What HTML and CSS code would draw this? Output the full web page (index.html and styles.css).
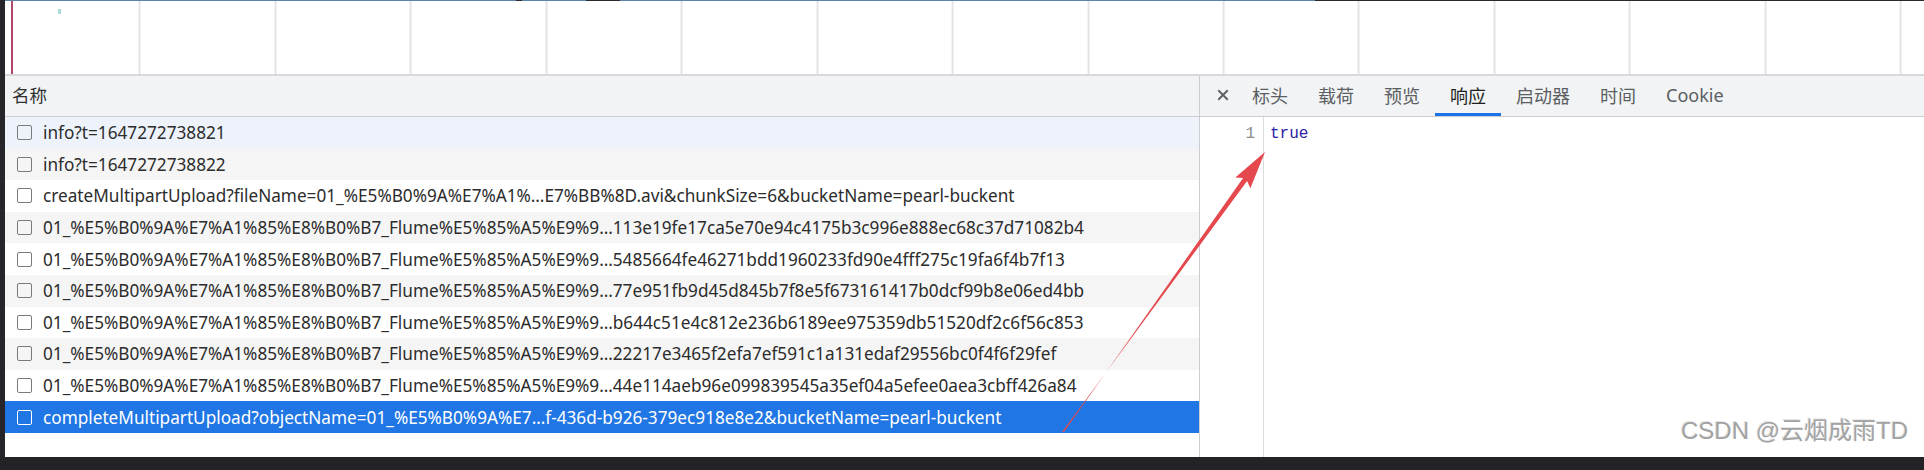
FILE: index.html
```html
<!DOCTYPE html>
<html lang="zh">
<head>
<meta charset="utf-8">
<title>Network</title>
<link rel="stylesheet" href="styles.css">
</head>
<body>
<div class="screen">
  <div class="top">
    <div class="strip"></div>
    <div class="devtools">
      <div class="timeline">
        <div class="overview-line"></div>
        <div class="overview">
          <span class="marker"></span>
          <span class="blip"></span>
        </div>
      </div>
      <div class="panes">
        <div class="list-pane">
          <div class="list-header">名称</div>
          <div class="rows">
            <div class="row hover"><span class="cb"></span><span class="name">info?t=1647272738821</span></div>
            <div class="row alt"><span class="cb"></span><span class="name">info?t=1647272738822</span></div>
            <div class="row"><span class="cb"></span><span class="name">createMultipartUpload?fileName=01_%E5%B0%9A%E7%A1%…E7%BB%8D.avi&amp;chunkSize=6&amp;bucketName=pearl-buckent</span></div>
            <div class="row alt"><span class="cb"></span><span class="name">01_%E5%B0%9A%E7%A1%85%E8%B0%B7_Flume%E5%85%A5%E9%9…113e19fe17ca5e70e94c4175b3c996e888ec68c37d71082b4</span></div>
            <div class="row"><span class="cb"></span><span class="name">01_%E5%B0%9A%E7%A1%85%E8%B0%B7_Flume%E5%85%A5%E9%9…5485664fe46271bdd1960233fd90e4fff275c19fa6f4b7f13</span></div>
            <div class="row alt"><span class="cb"></span><span class="name">01_%E5%B0%9A%E7%A1%85%E8%B0%B7_Flume%E5%85%A5%E9%9…77e951fb9d45d845b7f8e5f673161417b0dcf99b8e06ed4bb</span></div>
            <div class="row"><span class="cb"></span><span class="name">01_%E5%B0%9A%E7%A1%85%E8%B0%B7_Flume%E5%85%A5%E9%9…b644c51e4c812e236b6189ee975359db51520df2c6f56c853</span></div>
            <div class="row alt"><span class="cb"></span><span class="name">01_%E5%B0%9A%E7%A1%85%E8%B0%B7_Flume%E5%85%A5%E9%9…22217e3465f2efa7ef591c1a131edaf29556bc0f4f6f29fef</span></div>
            <div class="row"><span class="cb"></span><span class="name">01_%E5%B0%9A%E7%A1%85%E8%B0%B7_Flume%E5%85%A5%E9%9…44e114aeb96e099839545a35ef04a5efee0aea3cbff426a84</span></div>
            <div class="row selected"><span class="cb"></span><span class="name">completeMultipartUpload?objectName=01_%E5%B0%9A%E7…f-436d-b926-379ec918e8e2&amp;bucketName=pearl-buckent</span></div>
          </div>
        </div>
        <div class="detail-pane">
          <div class="tabbar">
            <span class="close">
              <svg width="12" height="12" viewBox="0 0 12 12"><path d="M2 2 L10 10 M10 2 L2 10" stroke="#5f6368" stroke-width="2" stroke-linecap="square"/></svg>
            </span>
            <span class="tab">标头</span>
            <span class="tab">载荷</span>
            <span class="tab">预览</span>
            <span class="tab active">响应</span>
            <span class="tab">启动器</span>
            <span class="tab">时间</span>
            <span class="tab">Cookie</span>
          </div>
          <div class="response">
            <div class="gutter"><span class="ln">1</span></div>
            <div class="code"><span class="kw">true</span></div>
          </div>
        </div>
      </div>
    </div>
  </div>
  <div class="bottom"></div>
  <svg class="annot" width="1924" height="470" viewBox="0 0 1924 470">
    <polygon points="1062.4,431.6 1247.1,181.1 1250.4,188.3 1265,152 1235.3,177.4 1243.1,178.1 1063.6,432.4" fill="#e5484d"/>
  </svg>
  <div class="watermark">CSDN @云烟成雨TD</div>
</div>
</body>
</html>
```

FILE: styles.css
```css
html, body {
  margin: 0;
  padding: 0;
  background: #232327;
}

.screen {
  position: relative;
  width: 1924px;
  height: 470px;
  display: flex;
  flex-direction: column;
  overflow: hidden;
  font-family: "Noto Sans", "Noto Sans CJK SC", sans-serif;
}

.top {
  display: flex;
  height: 457px;
}

.strip {
  width: 5px;
  background: #25252a;
}

.devtools {
  flex: 1;
  display: flex;
  flex-direction: column;
  background: #fff;
}

.timeline {
  height: 76px;
  display: flex;
  flex-direction: column;
  border-bottom: 2px solid #d9d9db;
  box-sizing: border-box;
}

.overview-line {
  height: 1px;
  background: linear-gradient(to right,
    #5b83ae 0 511px,
    #2a2a2e 511px 517px,
    #5b83ae 517px 581px,
    #2a2a2e 581px 615px,
    #5b83ae 615px 1310px,
    #2a2a2e 1310px 100%);
}

.overview {
  position: relative;
  flex: 1;
  background: repeating-linear-gradient(to right,
    transparent 0 133.45px,
    #e4e4e4 133.45px 135.45px);
  background-position: 0.55px 0;
}

.marker {
  position: absolute;
  left: 6px;
  top: 0;
  width: 2px;
  height: 100%;
  background: #b04a68;
}

.blip {
  position: absolute;
  left: 53px;
  top: 8px;
  width: 3px;
  height: 5px;
  background: #a9ddd9;
}

.panes {
  flex: 1;
  display: flex;
  min-height: 0;
}

.list-pane {
  width: 1194px;
  border-right: 1px solid #cbcdd1;
  display: flex;
  flex-direction: column;
}

.list-header {
  height: 41px;
  box-sizing: border-box;
  border-bottom: 1px solid #cbcdd1;
  background: #f1f3f4;
  display: flex;
  align-items: center;
  padding-left: 7px;
  padding-bottom: 3px;
  font-family: "Noto Sans CJK SC", sans-serif;
  font-size: 17.5px;
  color: #303030;
}

.rows {
  display: flex;
  flex-direction: column;
}

.row {
  height: 31.6px;
  display: flex;
  align-items: center;
  padding-left: 12px;
  font-size: 17.2px;
  color: #2c2c2c;
  white-space: nowrap;
  background: #fff;
}

.row.alt {
  background: #f5f5f5;
}

.row.hover {
  background: #eef3fb;
}

.row.selected {
  background: #1f76e4;
  color: #fff;
}

.cb {
  width: 13px;
  height: 13px;
  border: 1.5px solid #777a7e;
  border-radius: 2px;
  margin-right: 11px;
  flex: none;
}

.row.selected .cb {
  border-color: #fff;
}

.detail-pane {
  flex: 1;
  display: flex;
  flex-direction: column;
}

.tabbar {
  height: 41px;
  box-sizing: border-box;
  border-bottom: 1px solid #cbcdd1;
  background: #f1f3f4;
  display: flex;
  align-items: stretch;
}

.close {
  margin-left: 8px;
  width: 29px;
  display: flex;
  align-items: center;
  justify-content: center;
  padding-bottom: 2px;
}

.tab {
  padding: 0 15px;
  display: flex;
  align-items: center;
  font-family: "Noto Sans", "Noto Sans CJK SC", sans-serif;
  font-size: 18px;
  color: #5b5e62;
  border-bottom: 3px solid transparent;
}

.tab.active {
  color: #1f1f1f;
  border-bottom-color: #1a73e8;
}

.response {
  flex: 1;
  display: flex;
}

.gutter {
  width: 55px;
  padding-right: 8px;
  padding-top: 6px;
  border-right: 1px solid #dcdcdc;
  text-align: right;
  font-family: "Liberation Mono", monospace;
  font-size: 16px;
  line-height: 22px;
  color: #8b8b8b;
}

.code {
  padding-left: 6px;
  padding-top: 6px;
  font-family: "Liberation Mono", monospace;
  font-size: 16px;
  line-height: 22px;
}

.kw {
  color: #2d21a8;
}

.bottom {
  height: 13px;
  background: #232327;
}

.annot {
  position: absolute;
  left: 0;
  top: 0;
  pointer-events: none;
}

.watermark {
  position: absolute;
  right: 16px;
  top: 416px;
  font-family: "Liberation Sans", "Noto Sans CJK SC", sans-serif;
  font-size: 24px;
  line-height: 30px;
  color: #a2a2a2;
  text-shadow: 1px 1px 0 #ffffff, -1px -1px 0 #e4e4e4;
}
```
